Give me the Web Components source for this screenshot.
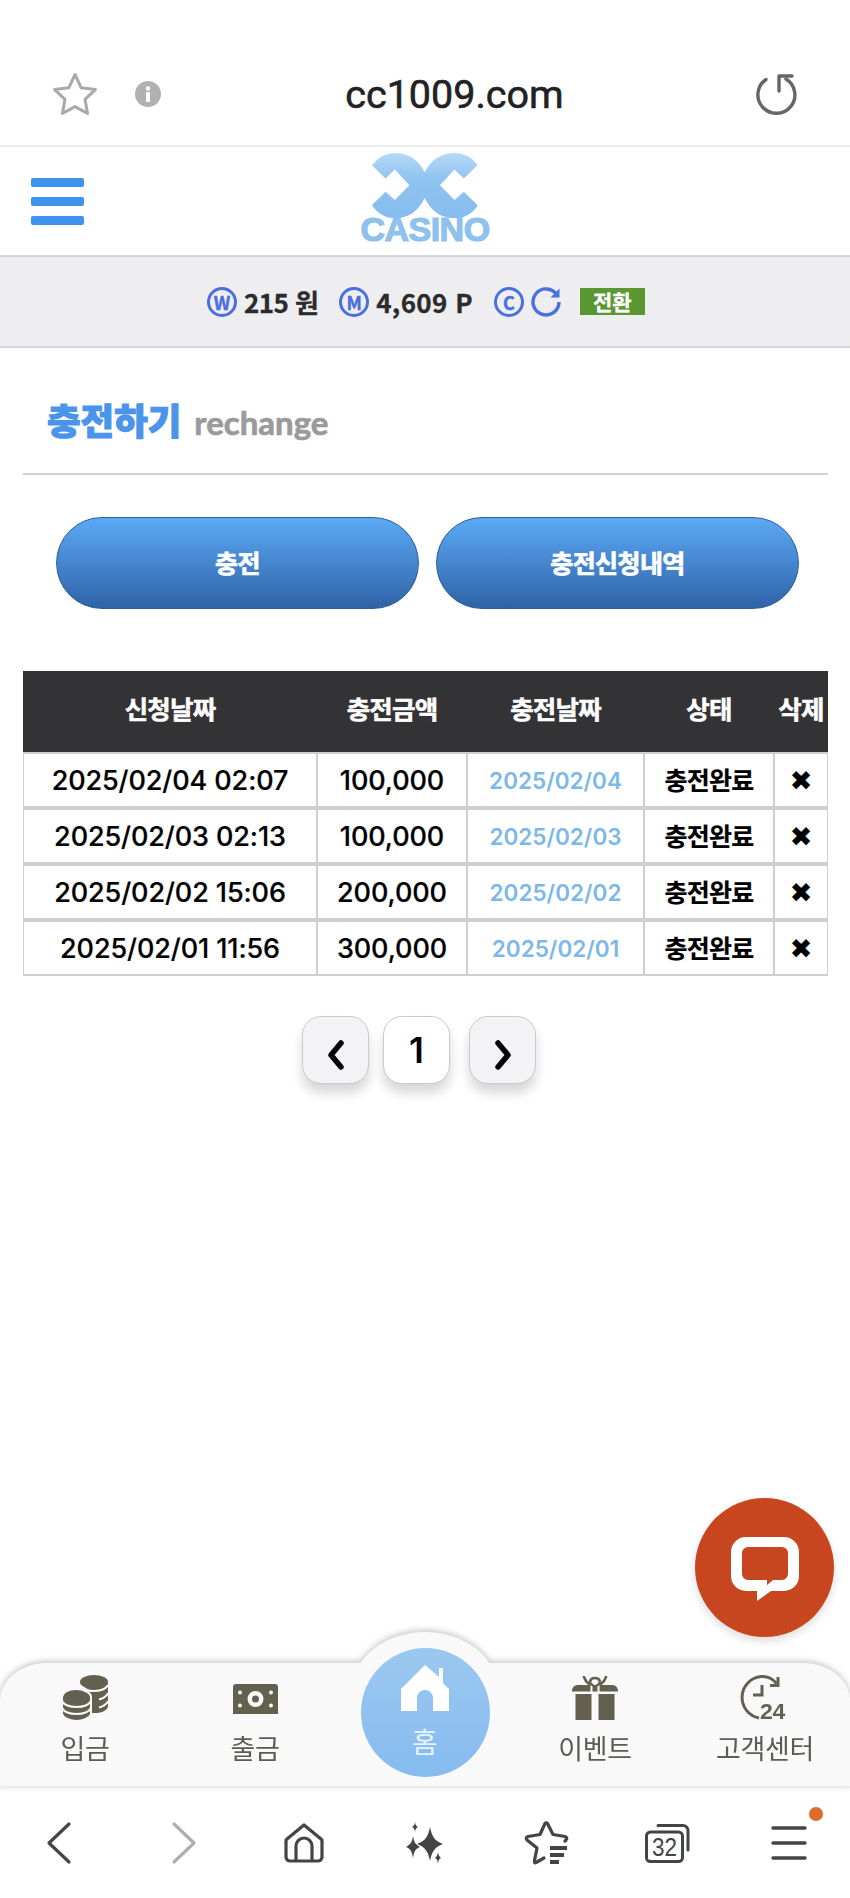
<!DOCTYPE html>
<html lang="ko">
<head>
<meta charset="utf-8">
<title>cc1009.com</title>
<style>
    html, body { margin: 0; padding: 0; background: #fff; }
    body {
        width: 850px;
        height: 1898px;
        position: relative;
        overflow: hidden;
        display: flex;
        flex-direction: column;
        font-family: "Noto Sans CJK KR", "Noto Sans", sans-serif;
    }
    main-content { flex: 1; }
</style>
</head>
<body>
<browser-bar url="cc1009.com"></browser-bar>
<site-header></site-header>
<wallet-bar></wallet-bar>
<main-content>
    <page-title heading="충전하기" sub="rechange"></page-title>
    <tab-buttons>
        <tab-button>충전</tab-button>
        <tab-button>충전신청내역</tab-button>
    </tab-buttons>
    <charge-table>
        <charge-row requested="2025/02/04 02:07" amount="100,000" charged="2025/02/04"></charge-row>
        <charge-row requested="2025/02/03 02:13" amount="100,000" charged="2025/02/03"></charge-row>
        <charge-row requested="2025/02/02 15:06" amount="200,000" charged="2025/02/02"></charge-row>
        <charge-row requested="2025/02/01 11:56" amount="300,000" charged="2025/02/01"></charge-row>
    </charge-table>
    <page-nav current="1"></page-nav>
</main-content>
<chat-fab></chat-fab>
<bottom-nav></bottom-nav>
<browser-toolbar></browser-toolbar>

<script>
/** Small helper: every component is a shadow root filled from a string. */
class ShadowElement extends HTMLElement {
    constructor() {
        super();
        this.attachShadow({ mode: 'open' });
    }
    connectedCallback() {
        this.shadowRoot.innerHTML = this.template();
    }
    attr(name) {
        return this.getAttribute(name) || '';
    }
}

class BrowserBar extends ShadowElement {
    template() {
        return `
            <style>
                :host {
                    display: grid;
                    grid-template-columns: 1fr auto 1fr;
                    align-items: center;
                    height: 147px;
                    padding: 42px 53px 0 52px;
                    box-sizing: border-box;
                    border-bottom: 2px solid #ececee;
                    background: #fff;
                }
                .left { display: flex; align-items: center; gap: 37px; }
                .url {
                    font: 400 39.5px/1 Roboto, "Noto Sans", sans-serif;
                    color: #222;
                    -webkit-text-stroke: .6px #222;
                    margin-left: 60px;
                    padding-top: 3px;
                }
                .right { display: flex; justify-content: flex-end; }
                svg { display: block; }
            </style>
            <div class="left">
                <svg width="46" height="44" viewBox="0 0 46 44" fill="none" stroke="#a9a9ab" stroke-width="3" stroke-linejoin="round">
                    <path d="M23 2.5l6.2 13.3 14.2 1.8-10.4 9.8 2.6 14.1L23 34.6l-12.6 6.9 2.6-14.1L2.6 17.6l14.2-1.8z"/>
                </svg>
                <svg width="26" height="26" viewBox="0 0 26 26">
                    <circle cx="13" cy="13" r="13" fill="#b1b1b3"/>
                    <circle cx="13" cy="7.5" r="2.2" fill="#fff"/>
                    <rect x="11" y="11" width="4" height="10" rx="1" fill="#fff"/>
                </svg>
            </div>
            <div class="url">${this.attr('url')}</div>
            <div class="right">
                <svg width="44" height="42" viewBox="0 0 44 42" fill="none" stroke="#666" stroke-width="3.4" stroke-linecap="round" stroke-linejoin="round">
                    <path d="M13 6.5A18.5 18.5 0 1 0 33 6"/>
                    <path d="M39 3H26v15"/>
                </svg>
            </div>
        `;
    }
}

class SiteHeader extends ShadowElement {
    template() {
        return `
            <style>
                :host {
                    display: block;
                    height: 108px;
                    background: #fff;
                    border-bottom: 2px solid #d6d6d9;
                }
                .wrap {
                    height: 100%;
                    display: grid;
                    grid-template-columns: 1fr auto 1fr;
                    align-items: center;
                    padding: 0 31px;
                    box-sizing: border-box;
                }
                .menu { display: flex; flex-direction: column; gap: 10px; width: 53px; }
                .menu i { display: block; height: 9px; border-radius: 2px; background: #3f92ee; }
                .logo {
                    display: flex;
                    flex-direction: column;
                    align-items: center;
                    width: 130px;
                    align-self: start;
                    padding-top: 6px;
                }
                .logo svg { display: block; margin-bottom: -2px; }
                .casino {
                    font: 700 34px/26px "Liberation Sans", sans-serif;
                    color: #8fc1ee;
                    -webkit-text-stroke: 1.2px #8fc1ee;
                    letter-spacing: -.5px;
                    height: 27px;
                }
            </style>
            <div class="wrap">
                <div class="menu"><i></i><i></i><i></i></div>
                <div class="logo">
                    <svg width="106" height="65" viewBox="22 8 318 196">
                        <defs>
                            <linearGradient id="lg" x1="0" y1="0" x2="0" y2="1">
                                <stop offset="0" stop-color="#b6d9f8"/>
                                <stop offset=".4" stop-color="#8fc3f0"/>
                                <stop offset="1" stop-color="#86bcee"/>
                            </linearGradient>
                        </defs>
                        <path fill="url(#lg)" d="M24 42Q50 8 92 8Q150 8 180 66Q210 8 270 8Q312 8 338 42Q340 46 336 48L298 85L270 58L226 105L270 150L298 125L336 162Q340 165 338 170Q312 205 270 205Q210 205 180 144Q150 205 92 205Q50 205 24 170Q20 165 24 162L62 125L90 150L134 105L90 58L62 85L24 48Q20 46 24 42Z"/>
                    </svg>
                    <div class="casino">CASINO</div>
                </div>
                <div></div>
            </div>
        `;
    }
}

class WalletBar extends ShadowElement {
    template() {
        return `
            <style>
                :host {
                    display: flex;
                    align-items: center;
                    height: 91px;
                    padding: 0 0 0 207px;
                    box-sizing: border-box;
                    background: #eeeef0;
                    border-bottom: 2px solid #d6d6d9;
                    font: 700 26px/1 "Noto Sans CJK KR", sans-serif;
                    color: #2b2b2d;
                    -webkit-text-stroke: .3px #2b2b2d;
                }
                .coin {
                    width: 30px;
                    height: 30px;
                    box-sizing: border-box;
                    border: 3.5px solid #4a6fdf;
                    border-radius: 50%;
                    display: flex;
                    align-items: center;
                    justify-content: center;
                    color: #4a6fdf;
                    -webkit-text-stroke: .4px #4a6fdf;
                    font-size: 18px;
                    flex: none;
                }
                .val { margin-left: 7px; white-space: nowrap; letter-spacing: -.6px; }
                .wide { letter-spacing: .3px; }
                .m { margin-left: 21px; }
                .c { margin-left: 21px; }
                svg { display: block; margin-left: 7px; }
                .swap {
                    margin-left: 19px;
                    width: 65px;
                    height: 27px;
                    background: #5a9632;
                    color: #fff;
                    -webkit-text-stroke: .3px #fff;
                    font-size: 21px;
                    display: flex;
                    align-items: center;
                    justify-content: center;
                }
            </style>
            <span class="coin">W</span><span class="val">215 원</span>
            <span class="coin m">M</span><span class="val wide">4,609 P</span>
            <span class="coin c">C</span>
            <svg width="30" height="30" viewBox="0 0 30 30" fill="none" stroke="#4a6fdf" stroke-width="3.4">
                <path d="M26 8A13 13 0 1 0 28 15"/>
                <path d="M28.5 1.5v9h-9z" fill="#4a6fdf" stroke="none"/>
            </svg>
            <span class="swap">전환</span>
        `;
    }
}

class PageTitle extends ShadowElement {
    template() {
        return `
            <style>
                :host {
                    display: flex;
                    align-items: baseline;
                    gap: 13px;
                    height: 127px;
                    margin: 0 22px 0 23px;
                    padding: 50px 0 0 24px;
                    box-sizing: border-box;
                    border-bottom: 2px solid #d2d2d6;
                }
                .h {
                    font: 900 36.5px/1.2 "Noto Sans CJK KR", sans-serif;
                    color: #4a94ea;
                    -webkit-text-stroke: 1.1px #4a94ea;
                }
                .s {
                    font: 700 33px/1.2 "Lato", sans-serif;
                    color: #9a9a9c;
                    -webkit-text-stroke: .7px #9a9a9c;
                }
            </style>
            <span class="h">${this.attr('heading')}</span><span class="s">${this.attr('sub')}</span>
        `;
    }
}

class TabButtons extends ShadowElement {
    template() {
        return `
            <style>
                :host {
                    display: grid;
                    grid-template-columns: 363px 363px;
                    gap: 17px;
                    padding: 42px 0 0 56px;
                }
            </style>
            <slot></slot>
        `;
    }
}

class TabButton extends ShadowElement {
    template() {
        return `
            <style>
                :host {
                    display: flex;
                    align-items: center;
                    justify-content: center;
                    height: 92px;
                    box-sizing: border-box;
                    border: 1.5px solid #2f5f9a;
                    border-radius: 46px;
                    background: linear-gradient(#5ca9f6, #2f63a6);
                    color: #fff;
                    font: 700 25px/1 "Noto Sans CJK KR", sans-serif;
                    -webkit-text-stroke: .7px #fff;
                    letter-spacing: -.6px;
                    padding-bottom: 2px;
                    cursor: pointer;
                }
            </style>
            <slot></slot>
        `;
    }
}

class ChargeTable extends ShadowElement {
    template() {
        return `
            <style>
                :host {
                    display: block;
                    margin: 62px 22px 0 23px;
                    --cols: 294px 150px 177px 130px 54px;
                }
                .head {
                    display: grid;
                    grid-template-columns: var(--cols);
                    align-items: center;
                    height: 81px;
                    padding-bottom: 7px;
                    box-sizing: border-box;
                    background: #333335;
                    color: #fff;
                    font: 700 25.5px/1 "Noto Sans CJK KR", sans-serif;
                    -webkit-text-stroke: .5px #fff;
                    letter-spacing: -.8px;
                    text-align: center;
                    white-space: nowrap;
                }
            </style>
            <div class="head">
                <span>신청날짜</span><span>충전금액</span><span>충전날짜</span><span>상태</span><span>삭제</span>
            </div>
            <slot></slot>
        `;
    }
}

class ChargeRow extends ShadowElement {
    template() {
        return `
            <style>
                :host {
                    display: grid;
                    grid-template-columns: 294px 150px 177px 130px 54px;
                    height: 56px;
                    font: 500 27px/1 Inter, "Noto Sans CJK KR", sans-serif;
                    color: #000;
                    -webkit-text-stroke: .2px #000;
                    background: #cfcfd3;
                    box-sizing: border-box;
                    padding: 1px 0;
                }
                span {
                    display: flex;
                    align-items: center;
                    justify-content: center;
                    background: #fff;
                    margin: 1px;
                    white-space: nowrap;
                    letter-spacing: -.1px;
                }
                .date { font-size: 22.5px; font-weight: 600; color: #7db8e8; -webkit-text-stroke: 0; letter-spacing: 0; padding-top: 3px; }
                .state { font: 700 25px/1 "Noto Sans CJK KR", sans-serif; letter-spacing: -.8px; padding-bottom: 2px; }
                .del { font: 400 27px/1 "DejaVu Sans", sans-serif; }
            </style>
            <span>${this.attr('requested')}</span>
            <span>${this.attr('amount')}</span>
            <span class="date">${this.attr('charged')}</span>
            <span class="state">충전완료</span>
            <span class="del">✖</span>
        `;
    }
}

class PageNav extends ShadowElement {
    template() {
        return `
            <style>
                :host {
                    display: flex;
                    padding: 40px 0 0 302px;
                }
                .b {
                    width: 67px;
                    height: 68px;
                    box-sizing: border-box;
                    border: 1.5px solid #cacacd;
                    border-radius: 19px;
                    background: #f3f3f5;
                    box-shadow: 0 9px 12px rgba(0, 0, 0, .16);
                    display: flex;
                    align-items: center;
                    justify-content: center;
                }
                .cur {
                    background: #fff;
                    font: 600 35px/1 Inter, sans-serif;
                    color: #000;
                    margin: 0 19px 0 14px;
                }
                svg { display: block; margin-top: 9px; }
            </style>
            <div class="b">
                <svg width="20" height="30" viewBox="0 0 20 30" fill="none" stroke="#000" stroke-width="5.5" stroke-linecap="round" stroke-linejoin="round"><path d="M15 3L5 15l10 12"/></svg>
            </div>
            <div class="b cur">${this.attr('current')}</div>
            <div class="b">
                <svg width="20" height="30" viewBox="0 0 20 30" fill="none" stroke="#000" stroke-width="5.5" stroke-linecap="round" stroke-linejoin="round"><path d="M5 3l10 12L5 27"/></svg>
            </div>
        `;
    }
}

class ChatFab extends ShadowElement {
    template() {
        return `
            <style>
                :host {
                    position: absolute;
                    left: 695px;
                    top: 1498px;
                    width: 139px;
                    height: 139px;
                    border-radius: 50%;
                    background: #c8461f;
                    box-shadow: 0 4px 10px rgba(0, 0, 0, .14);
                    display: flex;
                    align-items: center;
                    justify-content: center;
                    z-index: 3;
                }
                svg { display: block; margin-top: 2px; }
            </style>
            <svg width="68" height="64" viewBox="0 0 68 64">
                <path fill="#fff" fill-rule="evenodd" d="M15 0H53A15 15 0 0 1 68 15V39A15 15 0 0 1 53 54H40L26 64V54H15A15 15 0 0 1 0 39V15A15 15 0 0 1 15 0ZM17 10A6 6 0 0 0 11 16V37A6 6 0 0 0 17 43H36V48L42 43H51A6 6 0 0 0 57 37V16A6 6 0 0 0 51 10Z"/>
            </svg>
        `;
    }
}

class BottomNav extends ShadowElement {
    template() {
        return `
            <style>
                :host {
                    display: grid;
                    grid-template-columns: repeat(5, 170px);
                    position: relative;
                    height: 125px;
                    z-index: 2;
                }
                /* panel and bump share one drop shadow */
                .bg {
                    position: absolute;
                    inset: 0;
                    filter: drop-shadow(0 -2px 3px rgba(0, 0, 0, .22));
                }
                .panel {
                    position: absolute;
                    inset: 0;
                    background: #f9f9f9;
                    border-radius: 46px 46px 0 0 / 38px 38px 0 0;
                    border-bottom: 2px solid #ececee;
                    box-sizing: border-box;
                }
                .bump {
                    position: absolute;
                    left: 353px;
                    top: -31px;
                    width: 144px;
                    height: 90px;
                    background: #f9f9f9;
                    border-radius: 72px 72px 0 0 / 56px 56px 0 0;
                }
                .home {
                    position: relative;
                    grid-column: 3;
                    justify-self: center;
                    margin-top: -15px;
                    width: 129px;
                    height: 129px;
                    border-radius: 50%;
                    background: linear-gradient(#9bc8f0, #86bbef);
                    display: flex;
                    flex-direction: column;
                    align-items: center;
                    color: #e8f4ff;
                    font: 400 28px/1 "Noto Sans CJK KR", sans-serif;
                }
                .home svg { display: block; margin-top: 17px; margin-bottom: 16px; }
                nav-item { position: relative; }
                .clock { margin-top: 5px; }
                .num { font: 700 22px/1 "Liberation Sans", sans-serif; fill: #63604f; stroke: none; }
            </style>
            <div class="bg"><div class="panel"></div><div class="bump"></div></div>
            <nav-item label="입금">
                <svg width="46" height="46" viewBox="0 0 46 46" fill="#63604f">
                    <path d="M18 7H46V31C46 34 42 37 36 38H25V14Z"/>
                    <g fill="none" stroke="#f9f9f9" stroke-width="2.200">
                        <path d="M46 10c-2 4-7 6-14 6-5 0-9-1-12-3"/>
                        <path d="M46 18c-1 3-4 5-9 6.500"/>
                        <path d="M46 26c-1 3-4 5-9 6.500"/>
                    </g>
                    <ellipse cx="32" cy="7" rx="14" ry="7"/>
                    <path stroke="#f9f9f9" stroke-width="2" d="M0 22C0 18 6 14 14 14S29 18 29 22V39C28 43 21 46 14.500 46S1 43 0 39Z"/>
                    <g fill="none" stroke="#f9f9f9" stroke-width="2.200">
                        <path d="M0 26c2 4 8 6 14.500 6S27 30 29 26"/>
                        <path d="M0 33c2 4 8 6 14.500 6S27 37 29 33"/>
                    </g>
                </svg>
            </nav-item>
            <nav-item label="출금">
                <svg width="45" height="30" viewBox="0 0 45 30" style="margin-top:2px">
                    <path fill="#63604f" fill-rule="evenodd" d="M3 0H42A3 3 0 0 1 45 3V30H0V3A3 3 0 0 1 3 0ZM22.500 7A8 8 0 1 0 22.500 23A8 8 0 1 0 22.500 7ZM22.500 11.500A3.500 3.500 0 1 1 22.500 18.500A3.500 3.500 0 1 1 22.500 11.500ZM7 6.500a2 2 0 1 0 .01 0ZM38 6.500a2 2 0 1 0 .01 0ZM7 19.500a2 2 0 1 0 .01 0ZM38 19.500a2 2 0 1 0 .01 0Z"/>
                </svg>
            </nav-item>
            <div class="home">
                <svg width="48" height="46" viewBox="0 0 48 46" fill="#fff">
                    <path d="M24 0L38 12V3H42V18L48 24V46H32V33a8 8 0 0 0-16 0V46H0V24Z"/>
                </svg>
                <span>홈</span>
            </div>
            <nav-item label="이벤트">
                <svg width="46" height="44" viewBox="0 0 46 44" fill="#63604f">
                    <path d="M0 15c0-4 3-6 6-6h12.500v6.500H0zM46 15c0-4-3-6-6-6H27.500v6.500H46z"/>
                    <rect x="3.500" y="18" width="16" height="26"/><rect x="26.500" y="18" width="16" height="26"/>
                    <rect x="20.500" y="9" width="5" height="6.500"/>
                    <g fill="none" stroke="#63604f" stroke-width="2.600" stroke-linecap="round">
                        <path d="M20.500 9c-4-1-3-7 2.500-7s6.500 6 2.500 7"/>
                        <path d="M17 8C14 6 13 4 12 1"/><path d="M29 8c3-2 4-4 5-7"/>
                    </g>
                </svg>
            </nav-item>
            <nav-item label="고객센터">
                <svg class="clock" width="50" height="54" viewBox="0 0 50 54" fill="none" stroke="#63604f" stroke-width="3">
                    <path d="M19 44A21 21 0 0 1 21 2.500C27 2 33 5 36.500 9.500"/>
                    <path d="M38 3v8.500h-8"/>
                    <path d="M22 11V21H13"/>
                    <text class="num" x="20" y="45" textLength="25" lengthAdjust="spacingAndGlyphs">24</text>
                </svg>
            </nav-item>
        `;
    }
}

class NavItem extends ShadowElement {
    template() {
        return `
            <style>
                :host {
                    display: flex;
                    flex-direction: column;
                    align-items: center;
                    height: 100%;
                    box-sizing: border-box;
                    padding-top: 10px;
                    font: 400 27px/1 "Noto Sans CJK KR", sans-serif;
                    color: #5c5c54;
                    letter-spacing: -.3px;
                }
                .ico { height: 50px; display: flex; align-items: center; }
                .lab { margin-top: 11px; white-space: nowrap; }
            </style>
            <div class="ico"><slot></slot></div>
            <div class="lab">${this.attr('label')}</div>
        `;
    }
}

class BrowserToolbar extends ShadowElement {
    template() {
        return `
            <style>
                :host {
                    display: grid;
                    grid-template-columns: repeat(7, 1fr);
                    align-items: center;
                    height: 110px;
                    box-sizing: border-box;
                    background: #fff;
                    justify-items: center;
                }
                .i { position: relative; display: flex; }
                svg { display: block; overflow: visible; }
                .dot {
                    position: absolute;
                    left: 38px;
                    top: -18px;
                    width: 14px;
                    height: 14px;
                    border-radius: 50%;
                    background: #e06a2e;
                }
            </style>
            <div class="i" style="margin-right:3px">
                <svg width="24" height="42" viewBox="0 0 24 42" fill="none" stroke="#444" stroke-width="3.200" stroke-linecap="round" stroke-linejoin="round"><path d="M22 2L2 21l20 19"/></svg>
            </div>
            <div class="i" style="margin-left:4px">
                <svg width="24" height="42" viewBox="0 0 24 42" fill="none" stroke="#aeaeb0" stroke-width="3.200" stroke-linecap="round" stroke-linejoin="round"><path d="M2 2l20 19L2 40"/></svg>
            </div>
            <div class="i">
                <svg width="40" height="40" viewBox="0 0 40 40" fill="none" stroke="#444" stroke-width="3.200" stroke-linejoin="round">
                    <path d="M20 2L37 16a2 2 0 0 1 1 2V34a4 4 0 0 1-4 4H6a4 4 0 0 1-4-4V18a2 2 0 0 1 1-2z"/>
                    <path d="M12 38V23a8 8 0 0 1 16 0V38"/>
                </svg>
            </div>
            <div class="i">
                <svg width="38" height="42" viewBox="0 0 38 42" fill="#444">
                    <path d="M24 5c2 10 5 14 13 17-8 3-11 7-13 17-2-10-5-14-13-17 8-3 11-7 13-17z"/>
                    <path d="M7 14c1 6 2 8 7 11-5 2-6 5-7 11-1-6-2-9-7-11 5-3 6-5 7-11z"/>
                    <path d="M9 0c.5 3 1 4 3 5-2 1-2.500 2-3 5-.5-3-1-4-3-5 2-1 2.500-2 3-5zM32 30c.5 3 1 4 3 6-2 1-2.500 2-3 6-.5-4-1-5-3-6 2-2 2.500-3 3-6z"/>
                </svg>
            </div>
            <div class="i">
                <svg width="45" height="42" viewBox="0 0 45 42" fill="none" stroke="#444" stroke-width="3.200" stroke-linecap="round" stroke-linejoin="round">
                    <path d="M20 36L12 40.500Q10 41.500 10.500 38.500L13 26L3 18Q1 15.500 4 14.500L16 12.500L21 1.500Q22 0 23.500 1.500L29 12.500L41 14.500Q44 15.500 42 18L41 19"/>
                    <path d="M26 26H43M26 33H40M26 40H35" stroke-width="4" stroke-linecap="butt"/>
                </svg>
            </div>
            <div class="i">
                <svg width="45" height="40" viewBox="0 0 45 40" fill="none" stroke="#444" stroke-width="3">
                    <rect x="1.500" y="9" width="36" height="29.500" rx="4"/>
                    <path d="M13 2.500H38a5 5 0 0 1 5 5V27" stroke-linecap="round"/>
                    <text x="19.500" y="33" text-anchor="middle" font-family="'Liberation Sans',sans-serif" font-size="25" fill="#444" stroke="none" textLength="25" lengthAdjust="spacingAndGlyphs">32</text>
                </svg>
            </div>
            <div class="i">
                <svg width="36" height="36" viewBox="0 0 36 36" fill="none" stroke="#444" stroke-width="3.400" stroke-linecap="round">
                    <path d="M2 3H34M2 18H34M2 33H34"/>
                </svg>
                <span class="dot"></span>
            </div>
        `;
    }
}

class MainContent extends HTMLElement {
    constructor() {
        super();
        this.attachShadow({ mode: 'open' }).innerHTML = '<style>:host{display:block}</style><slot></slot>';
    }
}

customElements.define('browser-bar', BrowserBar);
customElements.define('site-header', SiteHeader);
customElements.define('wallet-bar', WalletBar);
customElements.define('main-content', MainContent);
customElements.define('page-title', PageTitle);
customElements.define('tab-buttons', TabButtons);
customElements.define('tab-button', TabButton);
customElements.define('charge-table', ChargeTable);
customElements.define('charge-row', ChargeRow);
customElements.define('page-nav', PageNav);
customElements.define('chat-fab', ChatFab);
customElements.define('bottom-nav', BottomNav);
customElements.define('nav-item', NavItem);
customElements.define('browser-toolbar', BrowserToolbar);
</script>
</body>
</html>
